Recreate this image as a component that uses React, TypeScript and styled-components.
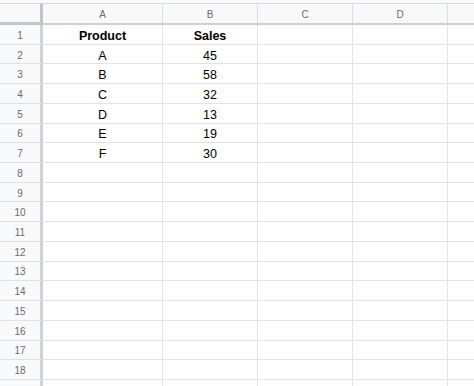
import React from "react";
import styled, { createGlobalStyle } from "styled-components";

// the last column and the last row only peek in at the edges, so they carry no label
const columns = ["A", "B", "C", "D", ""];
const ROW_COUNT = 19;
const LABELED_ROWS = 18;

const data: string[][] = [
  ["Product", "Sales"],
  ["A", "45"],
  ["B", "58"],
  ["C", "32"],
  ["D", "13"],
  ["E", "19"],
  ["F", "30"],
];

const App: React.FC = () => {
  const rows = Array.from({ length: ROW_COUNT }, (_, i) => i + 1);
  return (
    <>
      <GlobalStyle />
      <Sheet>
        <Grid>
          <CornerCell />
          {columns.map((c, ci) => (
            <ColumnHeader key={ci}>{c}</ColumnHeader>
          ))}
          {rows.map((r) => (
            <React.Fragment key={r}>
              <RowHeader>{r <= LABELED_ROWS ? r : ""}</RowHeader>
              {columns.map((_, ci) => (
                <Cell key={ci} $bold={r === 1}>
                  {data[r - 1]?.[ci] ?? ""}
                </Cell>
              ))}
            </React.Fragment>
          ))}
        </Grid>
      </Sheet>
    </>
  );
};

export default App;

const GlobalStyle = createGlobalStyle`
  html, body {
    margin: 0;
    padding: 0;
    background: #ffffff;
    overflow: hidden;
  }
  body {
    font-family: "Liberation Sans", Arial, sans-serif;
  }
`;

const Sheet = styled.div`
  width: 474px;
  height: 386px;
  padding-top: 3px;
  background: #fbfbfb;
  box-sizing: border-box;
  overflow: hidden;
`;

const Grid = styled.div`
  display: grid;
  grid-template-columns: 43px 120px 95px 95px 95px 95px;
  grid-template-rows: 22px repeat(${ROW_COUNT}, 19.72px);
  background: #ffffff;
`;

const CornerCell = styled.div`
  box-sizing: border-box;
  background: #f8f9fa;
  border-top: 1px solid #d9d9d9;
  border-right: 3px solid #c4c4c4;
  border-bottom: 3px solid #c4c4c4;
`;

const ColumnHeader = styled.div`
  box-sizing: border-box;
  display: flex;
  align-items: center;
  justify-content: center;
  background: #f8f9fa;
  border-top: 1px solid #d9d9d9;
  border-right: 1px solid #dcdcdc;
  border-bottom: 2px solid #cfcfcf;
  color: #6b6b6b;
  font-size: 10px;
  padding-top: 1px;
`;

const RowHeader = styled.div`
  box-sizing: border-box;
  display: flex;
  align-items: center;
  justify-content: center;
  background: #f8f9fa;
  border-right: 3px solid #d2d2d2;
  border-bottom: 1px solid #e1e1e1;
  color: #6b6b6b;
  font-size: 10px;
  padding-top: 2px;
`;

const Cell = styled.div<{ $bold?: boolean }>`
  box-sizing: border-box;
  display: flex;
  align-items: center;
  justify-content: center;
  border-right: 1px solid #e3e3e3;
  border-bottom: 1px solid #e3e3e3;
  color: #000000;
  font-size: 12.5px;
  font-weight: ${(p) => (p.$bold ? 700 : 400)};
  white-space: nowrap;
  padding-top: 3px;
`;
